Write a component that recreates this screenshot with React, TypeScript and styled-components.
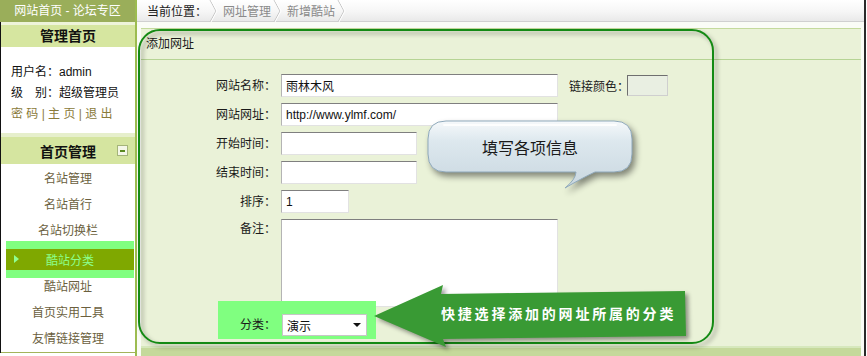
import React from "react";
import styled, { createGlobalStyle } from "styled-components";

const Global = createGlobalStyle`
  html, body { margin: 0; padding: 0; background: #fff; }
  body {
    font-family: "Liberation Sans", "Noto Sans CJK SC", sans-serif;
    font-size: 12px;
    color: #222;
  }
  * { box-sizing: border-box; }
`;

const FONT = `"Liberation Sans", "Noto Sans CJK SC", sans-serif`;

const Page = styled.div`
  position: relative;
  display: flex;
  width: 867px;
  height: 356px;
  overflow: hidden;
  background: #fff;
`;

/* ---------- sidebar ---------- */
const Sidebar = styled.aside`
  width: 137px;
  flex: none;
  display: flex;
  flex-direction: column;
  border-right: 2px solid #9cbc50;
`;

const SiteTitle = styled.div`
  height: 22px;
  line-height: 22px;
  background: #9aae5a;
  color: #fff;
  font-size: 12px;
  text-align: center;
`;

const SideBody = styled.div`
  border-left: 1px solid #111;
  display: flex;
  flex-direction: column;
`;

const PanelHead = styled.div`
  height: 25px;
  border-top: 3px solid #eef4da;
  background: #d6e6a0;
  font-size: 14px;
  font-weight: 700;
  line-height: 22px;
  text-align: center;
  color: #111;
`;

const UserInfo = styled.div`
  padding: 15px 0 8px 10px;
  font-size: 12px;
  line-height: 21px;
  color: #111;
`;

const UserLinks = styled.div`
  color: #8a7a3a;
  white-space: pre;
`;

const SectionHead = styled.div`
  height: 31px;
  border-top: 4px solid #e6efcc;
  background: #d5e5a0;
  display: grid;
  grid-template-columns: 1fr auto 1fr;
  align-items: center;
  font-size: 14px;
  font-weight: 700;
  color: #111;
`;

const SectionTitle = styled.span`
  grid-column: 2;
`;

const Toggle = styled.span`
  grid-column: 3;
  justify-self: end;
  margin-right: 7px;
  width: 11px;
  height: 11px;
  border: 1px solid #a4b47a;
  background: #f4f7e8;
  display: flex;
  align-items: center;
  justify-content: center;
  &::after {
    content: "";
    width: 5px;
    height: 2px;
    background: #5b8a22;
  }
`;

const Menu = styled.nav`
  padding-top: 2px;
  display: flex;
  flex-direction: column;
  border-bottom: 1px solid #a3b35a;
`;

const MenuItem = styled.div`
  height: 26px;
  line-height: 26px;
  text-align: center;
  font-size: 12px;
  color: #6b5f3e;
`;

const ActiveRow = styled.div`
  height: 30px;
  display: flex;
  align-items: center;
`;

const ActiveBar = styled.div`
  margin-left: 5px;
  width: 128px;
  height: 21px;
  background: #7fa800;
  box-shadow: 0 -8px 0 #80ff80, 0 8px 0 #80ff80;
  display: grid;
  grid-template-columns: 20px 1fr 20px;
  align-items: center;
  color: #8cff8c;
  font-size: 12px;
  text-align: center;
`;

const Caret = styled.span`
  margin-left: 8px;
  width: 0;
  height: 0;
  border-top: 4px solid transparent;
  border-bottom: 4px solid transparent;
  border-left: 5px solid #90ff90;
`;

/* ---------- main ---------- */
const Main = styled.main`
  flex: 1;
  display: flex;
  flex-direction: column;
  border-right: 2px solid #2a2a2a;
  margin-right: 1px;
  background: #fafcf6;
`;

const Crumbs = styled.div`
  height: 22px;
  flex: none;
  display: flex;
  align-items: center;
  padding-left: 10px;
  border-bottom: 1px solid #d0d0d0;
  background: linear-gradient(#ffffff, #f6f6f6 55%, #e9e9e9);
  font-size: 12px;
`;

const CrumbHere = styled.span`
  color: #1a1a1a;
`;

const Crumb = styled.span`
  color: #8a8a8a;
`;

const Sep = styled.svg`
  margin: 0 5px 0 2px;
  flex: none;
`;

const Content = styled.section`
  flex: 1;
  margin: 6px 3px 0 4px;
  display: flex;
  flex-direction: column;
  background: #eaf2d8;
  border-top: 1px solid #c4da9c;
`;

const BoxHead = styled.div`
  height: 31px;
  line-height: 30px;
  padding-left: 5px;
  border-bottom: 1px solid #b6d494;
  font-size: 12px;
  color: #1a1a1a;
`;

const FormBody = styled.div`
  flex: 1;
  padding-top: 14px;
  display: flex;
  flex-direction: column;
  gap: 6px;
`;

const Row = styled.div<{ $top?: boolean }>`
  display: flex;
  align-items: ${(p) => (p.$top ? "flex-start" : "center")};
  gap: 5px;
`;

const Label = styled.label<{ $w?: number; $pt?: number }>`
  width: ${(p) => p.$w ?? 135}px;
  flex: none;
  text-align: right;
  font-size: 12px;
  line-height: 16px;
  padding-top: ${(p) => p.$pt ?? 0}px;
  color: #1a1a1a;
`;

const TextInput = styled.input<{ $w: number }>`
  width: ${(p) => p.$w}px;
  height: 23px;
  padding: 0 4px;
  font-family: ${FONT};
  font-size: 12px;
  color: #111;
  background: #fff;
  border-style: solid;
  border-width: 1px;
  border-color: #7f7f7f #e2e2e2 #e2e2e2 #b4b4b4;
  outline: none;
`;

const ColorLabel = styled.span`
  margin-left: 6px;
  font-size: 12px;
  color: #1a1a1a;
`;

const ColorBox = styled.span`
  width: 41px;
  height: 21px;
  margin-left: -7px;
  border-style: solid;
  border-width: 1px;
  border-color: #6f6f6f #cfcfcf #cfcfcf #6f6f6f;
  background: #e9efe2;
`;

const Note = styled.textarea`
  width: 277px;
  height: 88px;
  resize: none;
  font-family: ${FONT};
  background: #fff;
  border-style: solid;
  border-width: 1px;
  border-color: #7f7f7f #e2e2e2 #e2e2e2 #b4b4b4;
  outline: none;
`;

const Highlight = styled.div`
  position: relative;
  margin: -12px 0 0 77px;
  width: 158px;
  height: 38px;
  padding: 13px 0 0 0;
  background: #80ff80;
  display: flex;
  align-items: flex-start;
  gap: 6px;
`;

const Select = styled.div`
  width: 85px;
  height: 22px;
  background: #fff;
  border: 1px solid #c6c6c6;
  display: flex;
  align-items: center;
  justify-content: space-between;
  padding: 0 5px 0 4px;
  font-size: 12px;
  color: #111;
`;

const SelectArrow = styled.span`
  width: 0;
  height: 0;
  border-left: 4px solid transparent;
  border-right: 4px solid transparent;
  border-top: 4px solid #111;
`;

const Footer = styled.div`
  height: 10px;
  flex: none;
  border-top: 2px solid #d6e8bc;
  background: #c5d99b;
`;

/* ---------- annotations (overlays) ---------- */
const AnnotBox = styled.div`
  position: absolute;
  left: 138px;
  top: 29px;
  width: 576px;
  height: 315px;
  border: 2px solid #148a14;
  border-radius: 22px;
  filter: drop-shadow(3px 3px 2px rgba(0, 0, 0, 0.35));
  pointer-events: none;
`;

const Bubble = styled.div`
  position: absolute;
  left: 424px;
  top: 117px;
  width: 220px;
  height: 80px;
  pointer-events: none;
`;

const BubbleSvg = styled.svg`
  display: block;
  filter: drop-shadow(3px 4px 3px rgba(0, 0, 0, 0.45));
`;

const BubbleText = styled.span`
  position: absolute;
  left: 4px;
  top: 4px;
  width: 204px;
  height: 51px;
  display: flex;
  align-items: center;
  justify-content: center;
  font-size: 16px;
  color: #1a1a1a;
`;

const Arrow = styled.div`
  position: absolute;
  left: 370px;
  top: 280px;
  width: 330px;
  height: 76px;
  pointer-events: none;
`;

const ArrowSvg = styled.svg`
  display: block;
  filter: drop-shadow(3px 3px 2px rgba(0, 0, 0, 0.4));
`;

const ArrowText = styled.span`
  position: absolute;
  left: 71px;
  top: 24px;
  line-height: 20px;
  font-size: 14px;
  font-weight: 700;
  letter-spacing: 2.8px;
  color: #fff;
  white-space: nowrap;
`;

const Chevron = () => (
  <Sep width="9" height="22" viewBox="0 0 9 22">
    <polyline points="1,0 7,11 1,22" fill="none" stroke="#c4c4c4" strokeWidth="1" />
    <polyline points="2,0 8,11 2,22" fill="none" stroke="#ffffff" strokeWidth="1" />
  </Sep>
);

const menu = ["名站管理", "名站首行", "名站切换栏"];
const menu2 = ["酷站网址", "首页实用工具", "友情链接管理"];

export default function App() {
  return (
    <Page>
      <Global />
      <Sidebar>
        <SiteTitle>网站首页 - 论坛专区</SiteTitle>
        <SideBody>
          <PanelHead>管理首页</PanelHead>
          <UserInfo>
            <div>用户名：admin</div>
            <div>级　别：超级管理员</div>
            <UserLinks>{"密 码 | 主 页 | 退 出"}</UserLinks>
          </UserInfo>
          <SectionHead>
            <SectionTitle>首页管理</SectionTitle>
            <Toggle />
          </SectionHead>
          <Menu>
            {menu.map((m) => (
              <MenuItem key={m}>{m}</MenuItem>
            ))}
            <ActiveRow>
              <ActiveBar>
                <Caret />
                <span>酷站分类</span>
                <span />
              </ActiveBar>
            </ActiveRow>
            {menu2.map((m) => (
              <MenuItem key={m}>{m}</MenuItem>
            ))}
          </Menu>
        </SideBody>
      </Sidebar>

      <Main>
        <Crumbs>
          <CrumbHere>当前位置：</CrumbHere>
          <Chevron />
          <Crumb>网址管理</Crumb>
          <Chevron />
          <Crumb>新增酷站</Crumb>
          <Chevron />
        </Crumbs>
        <Content>
          <BoxHead>添加网址</BoxHead>
          <FormBody>
            <Row>
              <Label>网站名称：</Label>
              <TextInput $w={277} defaultValue="雨林木风" readOnly />
              <ColorLabel>链接颜色：</ColorLabel>
              <ColorBox />
            </Row>
            <Row>
              <Label>网站网址：</Label>
              <TextInput $w={277} defaultValue="http://www.ylmf.com/" readOnly />
            </Row>
            <Row>
              <Label>开始时间：</Label>
              <TextInput $w={136} readOnly />
            </Row>
            <Row>
              <Label>结束时间：</Label>
              <TextInput $w={136} readOnly />
            </Row>
            <Row>
              <Label>排序：</Label>
              <TextInput $w={68} defaultValue="1" readOnly />
            </Row>
            <Row $top>
              <Label $pt={2}>备注：</Label>
              <Note readOnly />
            </Row>
            <Highlight>
              <Label $w={58} $pt={3}>分类：</Label>
              <Select>
                <span>演示</span>
                <SelectArrow />
              </Select>
            </Highlight>
          </FormBody>
          <Footer />
        </Content>
      </Main>

      <AnnotBox />

      <Bubble>
        <BubbleSvg width="220" height="80" viewBox="0 0 220 80">
          <defs>
            <linearGradient id="bubbleFill" x1="0" y1="0" x2="0" y2="1">
              <stop offset="0" stopColor="#f6f9fb" />
              <stop offset="0.3" stopColor="#dde8ee" />
              <stop offset="1" stopColor="#c9d7e0" />
            </linearGradient>
          </defs>
          <path
            d="M22,4 H190 Q208,4 208,22 V37 Q208,55 190,55 H171 Q160,60 141,71 Q152,62 152,55 H22 Q4,55 4,37 V22 Q4,4 22,4 Z"
            fill="url(#bubbleFill)"
            stroke="#8fa9bb"
            strokeWidth="1"
          />
          <path d="M20,8 H192" stroke="#ffffff" strokeWidth="2" strokeLinecap="round" opacity="0.9" />
        </BubbleSvg>
        <BubbleText>填写各项信息</BubbleText>
      </Bubble>

      <Arrow>
        <ArrowSvg width="330" height="76" viewBox="0 0 330 76">
          <polygon
            points="4,36 73,5 71,14 315,11 316,56 73,59 76,67"
            fill="#399a34"
          />
        </ArrowSvg>
        <ArrowText>快捷选择添加的网址所属的分类</ArrowText>
      </Arrow>
    </Page>
  );
}
